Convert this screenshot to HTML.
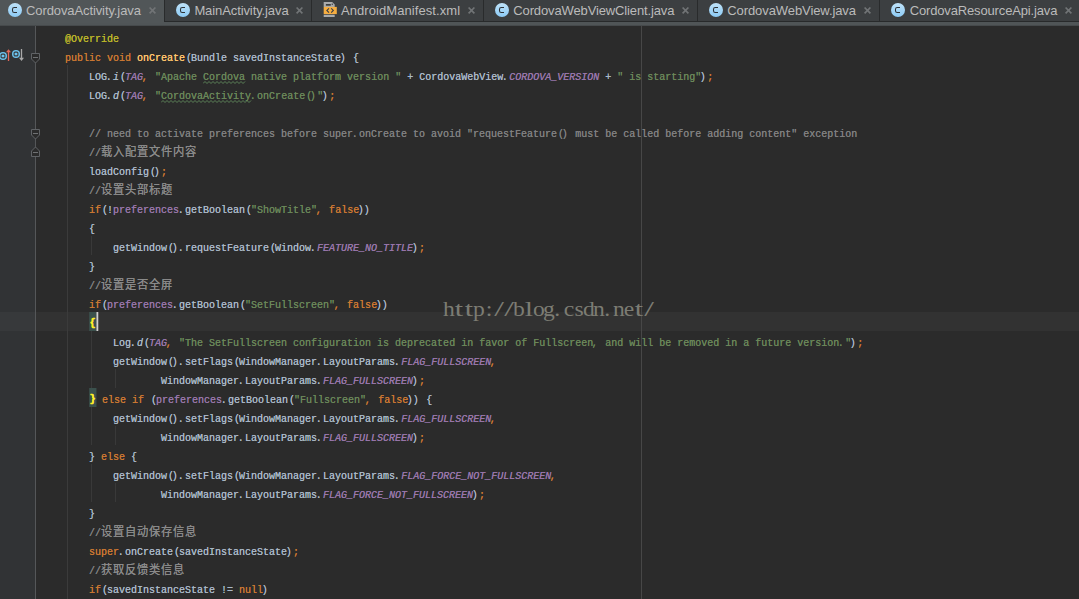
<!DOCTYPE html>
<html><head><meta charset="utf-8"><title>CordovaActivity.java</title>
<style>
html,body{margin:0;padding:0}
body{width:1079px;height:599px;overflow:hidden;background:#2b2b2b;position:relative;font-family:"Liberation Sans",sans-serif}
#tabs{position:absolute;left:0;top:0;width:1079px;height:26px;background:#3c3f41}
#tabs .under{position:absolute;left:0;top:21px;width:1079px;height:1px;background:#282a2b}
#tabs .strip{position:absolute;left:0;top:22px;width:1079px;height:4px;background:linear-gradient(#505557,#505557 70%,#3f4244)}
.tab{position:absolute;top:0;height:21px}
.tab.act{background:#515658;height:23px}
.tsep{position:absolute;top:0;width:1px;height:21px;background:#292b2c}
.ic{position:absolute;top:2px}
.cl{position:absolute;top:6px}
.tl{position:absolute;top:3px;font-size:13px;line-height:15px;letter-spacing:-0.1px;color:#bbbbbb;white-space:pre}
#gutter{position:absolute;left:0;top:26px;width:35px;height:573px;background:#313335}
#gline{position:absolute;left:35px;top:26px;width:1px;height:573px;background:#555759}
.fm{position:absolute;left:30px}
#margin{position:absolute;left:641px;top:26px;width:1px;height:573px;background:#474747}
.ig{position:absolute;width:1px}
#curline{position:absolute;left:0;top:312px;width:1079px;height:19px;background:#323232}
#curgut{position:absolute;left:0;top:312px;width:35px;height:19px;background:#37393b}
#code{position:absolute;left:41px;top:0;width:1300px;height:599px;transform:scaleX(0.90909);transform-origin:0 0;font-family:"Liberation Mono",monospace;font-size:11px;color:#a9b7c6;text-shadow:0 0 0}
.ln{position:absolute;left:0;height:19px;line-height:25px;white-space:pre}
.k{color:#cc7832} .a{color:#bbb529} .m{color:#ffc66d} .s{color:#6a8759} .f{color:#9876aa}
.sf{color:#9876aa;font-style:italic} .i{font-style:italic} .c{color:#808080}
.wv{position:absolute}
.ln u{text-decoration:none;position:relative} u.l{left:-1.54px} u.r{left:1.10px}
.bm{color:#ffef28;font-weight:bold;background:#3b514d;display:inline-block;height:19px;width:7.70px;text-align:center;vertical-align:top;font-size:10.5px;line-height:22px;-webkit-text-stroke:0.4px #ffef28}
.caret{display:inline-block;width:2.20px;height:19px;background:#d0d0d0;vertical-align:top;margin-right:-2.20px}
.cj{font-family:"Liberation Mono","Noto Sans CJK SC",monospace;font-size:12.4px;letter-spacing:0.8px;line-height:0;color:#8a8a8a}
#wm{position:absolute;left:444px;top:297px;height:24px;line-height:24px;font-family:"Liberation Serif",serif;font-size:20px;color:#7c7c73;white-space:pre}
#wm i{display:inline-block;width:10px;text-align:center;font-style:normal;transform:scaleX(1.18)}
</style></head><body>
<div id="curline"></div>
<div id="gutter"></div><div id="curgut"></div><div id="gline"></div>
<div id="margin"></div>
<div class="ig" style="left:67px;top:65px;height:534px;background:#3b3b3b"></div><div class="ig" style="left:91px;top:236px;height:19px;background:#393939"></div><div class="ig" style="left:91px;top:331px;height:57px;background:#393939"></div><div class="ig" style="left:91px;top:407px;height:38px;background:#393939"></div><div class="ig" style="left:91px;top:464px;height:38px;background:#393939"></div><div class="ig" style="left:115px;top:369px;height:19px;background:#393939"></div><div class="ig" style="left:115px;top:426px;height:19px;background:#393939"></div><div class="ig" style="left:115px;top:483px;height:19px;background:#393939"></div>
<svg class="wv" style="left:203px;top:81px" width="43" height="3" viewBox="0 0 43 3"><path d="M0 2.5 L2 0.5 L4 2.5 L6 0.5 L8 2.5 L10 0.5 L12 2.5 L14 0.5 L16 2.5 L18 0.5 L20 2.5 L22 0.5 L24 2.5 L26 0.5 L28 2.5 L30 0.5 L32 2.5 L34 0.5 L36 2.5 L38 0.5 L40 2.5 L42 0.5" fill="none" stroke="#5c8258" stroke-width="1"/></svg><svg class="wv" style="left:161px;top:100px" width="91" height="3" viewBox="0 0 91 3"><path d="M0 2.5 L2 0.5 L4 2.5 L6 0.5 L8 2.5 L10 0.5 L12 2.5 L14 0.5 L16 2.5 L18 0.5 L20 2.5 L22 0.5 L24 2.5 L26 0.5 L28 2.5 L30 0.5 L32 2.5 L34 0.5 L36 2.5 L38 0.5 L40 2.5 L42 0.5 L44 2.5 L46 0.5 L48 2.5 L50 0.5 L52 2.5 L54 0.5 L56 2.5 L58 0.5 L60 2.5 L62 0.5 L64 2.5 L66 0.5 L68 2.5 L70 0.5 L72 2.5 L74 0.5 L76 2.5 L78 0.5 L80 2.5 L82 0.5 L84 2.5 L86 0.5 L88 2.5 L90 0.5" fill="none" stroke="#5c8258" stroke-width="1"/></svg>
<svg class="fm" style="top:52px" width="11" height="12" viewBox="0 0 11 12"><path d="M1.5 1.5 H9.5 V7 L5.5 11 L1.5 7 Z" fill="#2b2b2b" stroke="#606366" stroke-width="1"/><path d="M3 5.5 H8" stroke="#6f7173" stroke-width="1"/></svg><svg class="fm" style="top:128px" width="11" height="12" viewBox="0 0 11 12"><path d="M1.5 1.5 H9.5 V7 L5.5 11 L1.5 7 Z" fill="#2b2b2b" stroke="#606366" stroke-width="1"/><path d="M3 5.5 H8" stroke="#6f7173" stroke-width="1"/></svg><svg class="fm" style="top:146px" width="11" height="12" viewBox="0 0 11 12"><path d="M1.5 10.5 H9.5 V5 L5.5 1 L1.5 5 Z" fill="#2b2b2b" stroke="#606366" stroke-width="1"/><path d="M3 6.5 H8" stroke="#6f7173" stroke-width="1"/></svg>
<svg style="position:absolute;left:0;top:48px" width="26" height="14" viewBox="0 0 26 14">
<circle cx="3" cy="8" r="4" fill="#6cc4ef"/><rect x="1.1" y="6.1" width="3.8" height="3.8" rx="1" fill="none" stroke="#38393b" stroke-width="1.1"/>
<path d="M8.5 13 V2.5" stroke="#e0685a" stroke-width="1.3" fill="none"/><path d="M6 4.3 L8.5 1.2 L11 4.3 Z" fill="#e0685a"/>
<circle cx="16" cy="6" r="4" fill="#6cc4ef"/><rect x="14.1" y="4.1" width="3.8" height="3.8" rx="1" fill="none" stroke="#38393b" stroke-width="1.1"/>
<path d="M21.5 1 V11" stroke="#a9a9a9" stroke-width="1.3" fill="none"/><path d="M19 9.8 L21.5 13 L24 9.8 Z" fill="#a9a9a9"/>
</svg>
<div id="code">
<div class="ln " style="top:27px">    <span class="a">@Override</span></div>
<div class="ln " style="top:46px">    <span class="k">public</span> <span class="k">void</span> <span class="m">onCreate</span><u class="r">(</u>Bundle savedInstanceState<u class="l">)</u> {</div>
<div class="ln " style="top:65px">        LOG<u class="l">.</u><span class="i">i</span><u class="r">(</u><span class="sf">TAG</span><span class="k"><u class="l">,</u></span> <span class="s">"Apache </span><span class="s w">Cordova</span><span class="s"> native platform version "</span> + CordovaWebView<u class="l">.</u><span class="sf">CORDOVA_VERSION</span> + <span class="s">" is starting"</span><u class="l">)</u><span class="k">;</span></div>
<div class="ln " style="top:84px">        LOG<u class="l">.</u><span class="i">d</span><u class="r">(</u><span class="sf">TAG</span><span class="k"><u class="l">,</u></span> <span class="s">"</span><span class="s w">CordovaActivity</span><span class="s"><u class="l">.</u>onCreate<u class="r">(</u><u class="l">)</u>"</span><u class="l">)</u><span class="k">;</span></div>
<div class="ln " style="top:103px"></div>
<div class="ln " style="top:122px">        <span class="c">// need to activate preferences before super<u class="l">.</u>onCreate to avoid "requestFeature<u class="r">(</u><u class="l">)</u> must be called before adding content" exception</span></div>
<div class="ln " style="top:141px">        <span class="c">//</span><span class="c"><span class="cj">载入配置文件内容</span></span></div>
<div class="ln " style="top:160px">        loadConfig<u class="r">(</u><u class="l">)</u><span class="k">;</span></div>
<div class="ln " style="top:179px">        <span class="c">//</span><span class="c"><span class="cj">设置头部标题</span></span></div>
<div class="ln " style="top:198px">        <span class="k">if</span><u class="r">(</u>!<span class="f">preferences</span><u class="l">.</u>getBoolean<u class="r">(</u><span class="s">"ShowTitle"</span><span class="k"><u class="l">,</u></span> <span class="k">false</span><u class="l">)</u><u class="l">)</u></div>
<div class="ln " style="top:217px">        {</div>
<div class="ln " style="top:236px">            getWindow<u class="r">(</u><u class="l">)</u><u class="l">.</u>requestFeature<u class="r">(</u>Window<u class="l">.</u><span class="sf">FEATURE_NO_TITLE</span><u class="l">)</u><span class="k">;</span></div>
<div class="ln " style="top:255px">        }</div>
<div class="ln " style="top:274px">        <span class="c">//</span><span class="c"><span class="cj">设置是否全屏</span></span></div>
<div class="ln " style="top:293px">        <span class="k">if</span><u class="r">(</u><span class="f">preferences</span><u class="l">.</u>getBoolean<u class="r">(</u><span class="s">"SetFullscreen"</span><span class="k"><u class="l">,</u></span> <span class="k">false</span><u class="l">)</u><u class="l">)</u></div>
<div class="ln cur" style="top:312px">        <span class="bm">{</span><span class="caret"></span></div>
<div class="ln " style="top:331px">            Log<u class="l">.</u><span class="i">d</span><u class="r">(</u><span class="sf">TAG</span><span class="k"><u class="l">,</u></span> <span class="s">"The SetFullscreen configuration is deprecated in favor of Fullscreen<u class="l">,</u> and will be removed in a future version<u class="l">.</u>"</span><u class="l">)</u><span class="k">;</span></div>
<div class="ln " style="top:350px">            getWindow<u class="r">(</u><u class="l">)</u><u class="l">.</u>setFlags<u class="r">(</u>WindowManager<u class="l">.</u>LayoutParams<u class="l">.</u><span class="sf">FLAG_FULLSCREEN</span><span class="k"><u class="l">,</u></span></div>
<div class="ln " style="top:369px">                    WindowManager<u class="l">.</u>LayoutParams<u class="l">.</u><span class="sf">FLAG_FULLSCREEN</span><u class="l">)</u><span class="k">;</span></div>
<div class="ln " style="top:388px">        <span class="bm">}</span> <span class="k">else</span> <span class="k">if</span> <u class="r">(</u><span class="f">preferences</span><u class="l">.</u>getBoolean<u class="r">(</u><span class="s">"Fullscreen"</span><span class="k"><u class="l">,</u></span> <span class="k">false</span><u class="l">)</u><u class="l">)</u> {</div>
<div class="ln " style="top:407px">            getWindow<u class="r">(</u><u class="l">)</u><u class="l">.</u>setFlags<u class="r">(</u>WindowManager<u class="l">.</u>LayoutParams<u class="l">.</u><span class="sf">FLAG_FULLSCREEN</span><span class="k"><u class="l">,</u></span></div>
<div class="ln " style="top:426px">                    WindowManager<u class="l">.</u>LayoutParams<u class="l">.</u><span class="sf">FLAG_FULLSCREEN</span><u class="l">)</u><span class="k">;</span></div>
<div class="ln " style="top:445px">        } <span class="k">else</span> {</div>
<div class="ln " style="top:464px">            getWindow<u class="r">(</u><u class="l">)</u><u class="l">.</u>setFlags<u class="r">(</u>WindowManager<u class="l">.</u>LayoutParams<u class="l">.</u><span class="sf">FLAG_FORCE_NOT_FULLSCREEN</span><span class="k"><u class="l">,</u></span></div>
<div class="ln " style="top:483px">                    WindowManager<u class="l">.</u>LayoutParams<u class="l">.</u><span class="sf">FLAG_FORCE_NOT_FULLSCREEN</span><u class="l">)</u><span class="k">;</span></div>
<div class="ln " style="top:502px">        }</div>
<div class="ln " style="top:521px">        <span class="c">//</span><span class="c"><span class="cj">设置自动保存信息</span></span></div>
<div class="ln " style="top:540px">        <span class="k">super</span><u class="l">.</u>onCreate<u class="r">(</u>savedInstanceState<u class="l">)</u><span class="k">;</span></div>
<div class="ln " style="top:559px">        <span class="c">//</span><span class="c"><span class="cj">获取反馈类信息</span></span></div>
<div class="ln " style="top:578px">        <span class="k">if</span><u class="r">(</u>savedInstanceState != <span class="k">null</span><u class="l">)</u></div>
</div>
<div id="wm"><i>h</i><i style="transform:scaleX(1.5)">t</i><i style="transform:scaleX(1.5)">t</i><i>p</i><i style="transform:scaleX(1.2)">:</i><i style="transform:scaleX(1.75)">/</i><i style="transform:scaleX(1.75)">/</i><i>b</i><i style="transform:scaleX(1.5)">l</i><i>o</i><i>g</i><i style="text-align:left;padding-left:1px;width:9px">.</i><i>c</i><i>s</i><i>d</i><i>n</i><i style="text-align:left;padding-left:1px;width:9px">.</i><i>n</i><i>e</i><i style="transform:scaleX(1.5)">t</i><i style="transform:scaleX(1.75)">/</i></div>
<div id="tabs"><div class="under"></div><div class="strip"></div>
<div class="tab act" style="left:0px;width:164px"></div>
<svg class="ic" style="left:7px" width="16" height="16" viewBox="0 0 16 16"><defs><linearGradient id="g0" x1="0" y1="0" x2="0" y2="1"><stop offset="0" stop-color="#bfe2f8"/><stop offset="1" stop-color="#8ccbf6"/></linearGradient></defs><circle cx="8" cy="8" r="7" fill="url(#g0)"/><path d="M10 5.5 H7.3 Q5.5 5.5 5.5 7.3 V8.7 Q5.5 10.5 7.3 10.5 H10" fill="none" stroke="#2d3237" stroke-width="1.05"/></svg>
<span class="tl" style="left:26px;letter-spacing:-0.1px">CordovaActivity.java</span>
<svg class="cl" style="left:148.2px" width="9" height="9" viewBox="0 0 9 9"><path d="M1.6 1.5 L7.4 7.3 M7.4 1.5 L1.6 7.3" stroke="#717476" stroke-width="1.7" fill="none"/></svg>
<div class="tab" style="left:165px;width:146px"></div>
<div class="tsep" style="left:164px"></div>
<svg class="ic" style="left:175px" width="16" height="16" viewBox="0 0 16 16"><defs><linearGradient id="g1" x1="0" y1="0" x2="0" y2="1"><stop offset="0" stop-color="#bfe2f8"/><stop offset="1" stop-color="#8ccbf6"/></linearGradient></defs><circle cx="8" cy="8" r="7" fill="url(#g1)"/><path d="M10 5.5 H7.3 Q5.5 5.5 5.5 7.3 V8.7 Q5.5 10.5 7.3 10.5 H10" fill="none" stroke="#2d3237" stroke-width="1.05"/></svg>
<span class="tl" style="left:194.4px;letter-spacing:-0.1px">MainActivity.java</span>
<svg class="cl" style="left:295.0px" width="9" height="9" viewBox="0 0 9 9"><path d="M1.6 1.5 L7.4 7.3 M7.4 1.5 L1.6 7.3" stroke="#717476" stroke-width="1.7" fill="none"/></svg>
<div class="tab" style="left:312px;width:171px"></div>
<div class="tsep" style="left:311px"></div>
<svg class="ic" style="left:323.3px;top:2px" width="15" height="15" viewBox="0 0 15 15"><path d="M0.7 0 H9.2 L11.7 2.5 V5 H0.7 Z" fill="#a9abac"/><rect x="2.9" y="2" width="4.9" height="1.7" fill="#3c3f41"/><rect x="8.7" y="1.6" width="1.2" height="1.3" fill="#3c3f41"/><rect x="0.7" y="4.9" width="13.1" height="7.2" fill="#f7ae41"/><path d="M6 6.3 L3.9 8.45 L6 10.6 M8.2 6.3 L10.3 8.45 L8.2 10.6" fill="none" stroke="#3b4046" stroke-width="1.15"/><rect x="0.7" y="12.8" width="11" height="2.2" fill="#a9abac"/></svg>
<span class="tl" style="left:341px;letter-spacing:0.07px">AndroidManifest.xml</span>
<svg class="cl" style="left:467.3px" width="9" height="9" viewBox="0 0 9 9"><path d="M1.6 1.5 L7.4 7.3 M7.4 1.5 L1.6 7.3" stroke="#717476" stroke-width="1.7" fill="none"/></svg>
<div class="tab" style="left:484px;width:213px"></div>
<div class="tsep" style="left:483px"></div>
<svg class="ic" style="left:493.7px" width="16" height="16" viewBox="0 0 16 16"><defs><linearGradient id="g3" x1="0" y1="0" x2="0" y2="1"><stop offset="0" stop-color="#bfe2f8"/><stop offset="1" stop-color="#8ccbf6"/></linearGradient></defs><circle cx="8" cy="8" r="7" fill="url(#g3)"/><path d="M10 5.5 H7.3 Q5.5 5.5 5.5 7.3 V8.7 Q5.5 10.5 7.3 10.5 H10" fill="none" stroke="#2d3237" stroke-width="1.05"/></svg>
<span class="tl" style="left:513.3px;letter-spacing:-0.13px">CordovaWebViewClient.java</span>
<svg class="cl" style="left:680.5px" width="9" height="9" viewBox="0 0 9 9"><path d="M1.6 1.5 L7.4 7.3 M7.4 1.5 L1.6 7.3" stroke="#717476" stroke-width="1.7" fill="none"/></svg>
<div class="tab" style="left:698px;width:181px"></div>
<div class="tsep" style="left:697px"></div>
<svg class="ic" style="left:708px" width="16" height="16" viewBox="0 0 16 16"><defs><linearGradient id="g4" x1="0" y1="0" x2="0" y2="1"><stop offset="0" stop-color="#bfe2f8"/><stop offset="1" stop-color="#8ccbf6"/></linearGradient></defs><circle cx="8" cy="8" r="7" fill="url(#g4)"/><path d="M10 5.5 H7.3 Q5.5 5.5 5.5 7.3 V8.7 Q5.5 10.5 7.3 10.5 H10" fill="none" stroke="#2d3237" stroke-width="1.05"/></svg>
<span class="tl" style="left:727.3px;letter-spacing:-0.09px">CordovaWebView.java</span>
<svg class="cl" style="left:863.3px" width="9" height="9" viewBox="0 0 9 9"><path d="M1.6 1.5 L7.4 7.3 M7.4 1.5 L1.6 7.3" stroke="#717476" stroke-width="1.7" fill="none"/></svg>
<div class="tab" style="left:880px;width:199px"></div>
<div class="tsep" style="left:879px"></div>
<svg class="ic" style="left:890px" width="16" height="16" viewBox="0 0 16 16"><defs><linearGradient id="g5" x1="0" y1="0" x2="0" y2="1"><stop offset="0" stop-color="#bfe2f8"/><stop offset="1" stop-color="#8ccbf6"/></linearGradient></defs><circle cx="8" cy="8" r="7" fill="url(#g5)"/><path d="M10 5.5 H7.3 Q5.5 5.5 5.5 7.3 V8.7 Q5.5 10.5 7.3 10.5 H10" fill="none" stroke="#2d3237" stroke-width="1.05"/></svg>
<span class="tl" style="left:909.7px;letter-spacing:-0.15px">CordovaResourceApi.java</span>
<svg class="cl" style="left:1064.1px" width="9" height="9" viewBox="0 0 9 9"><path d="M1.6 1.5 L7.4 7.3 M7.4 1.5 L1.6 7.3" stroke="#717476" stroke-width="1.7" fill="none"/></svg>
</div>
</body></html>
